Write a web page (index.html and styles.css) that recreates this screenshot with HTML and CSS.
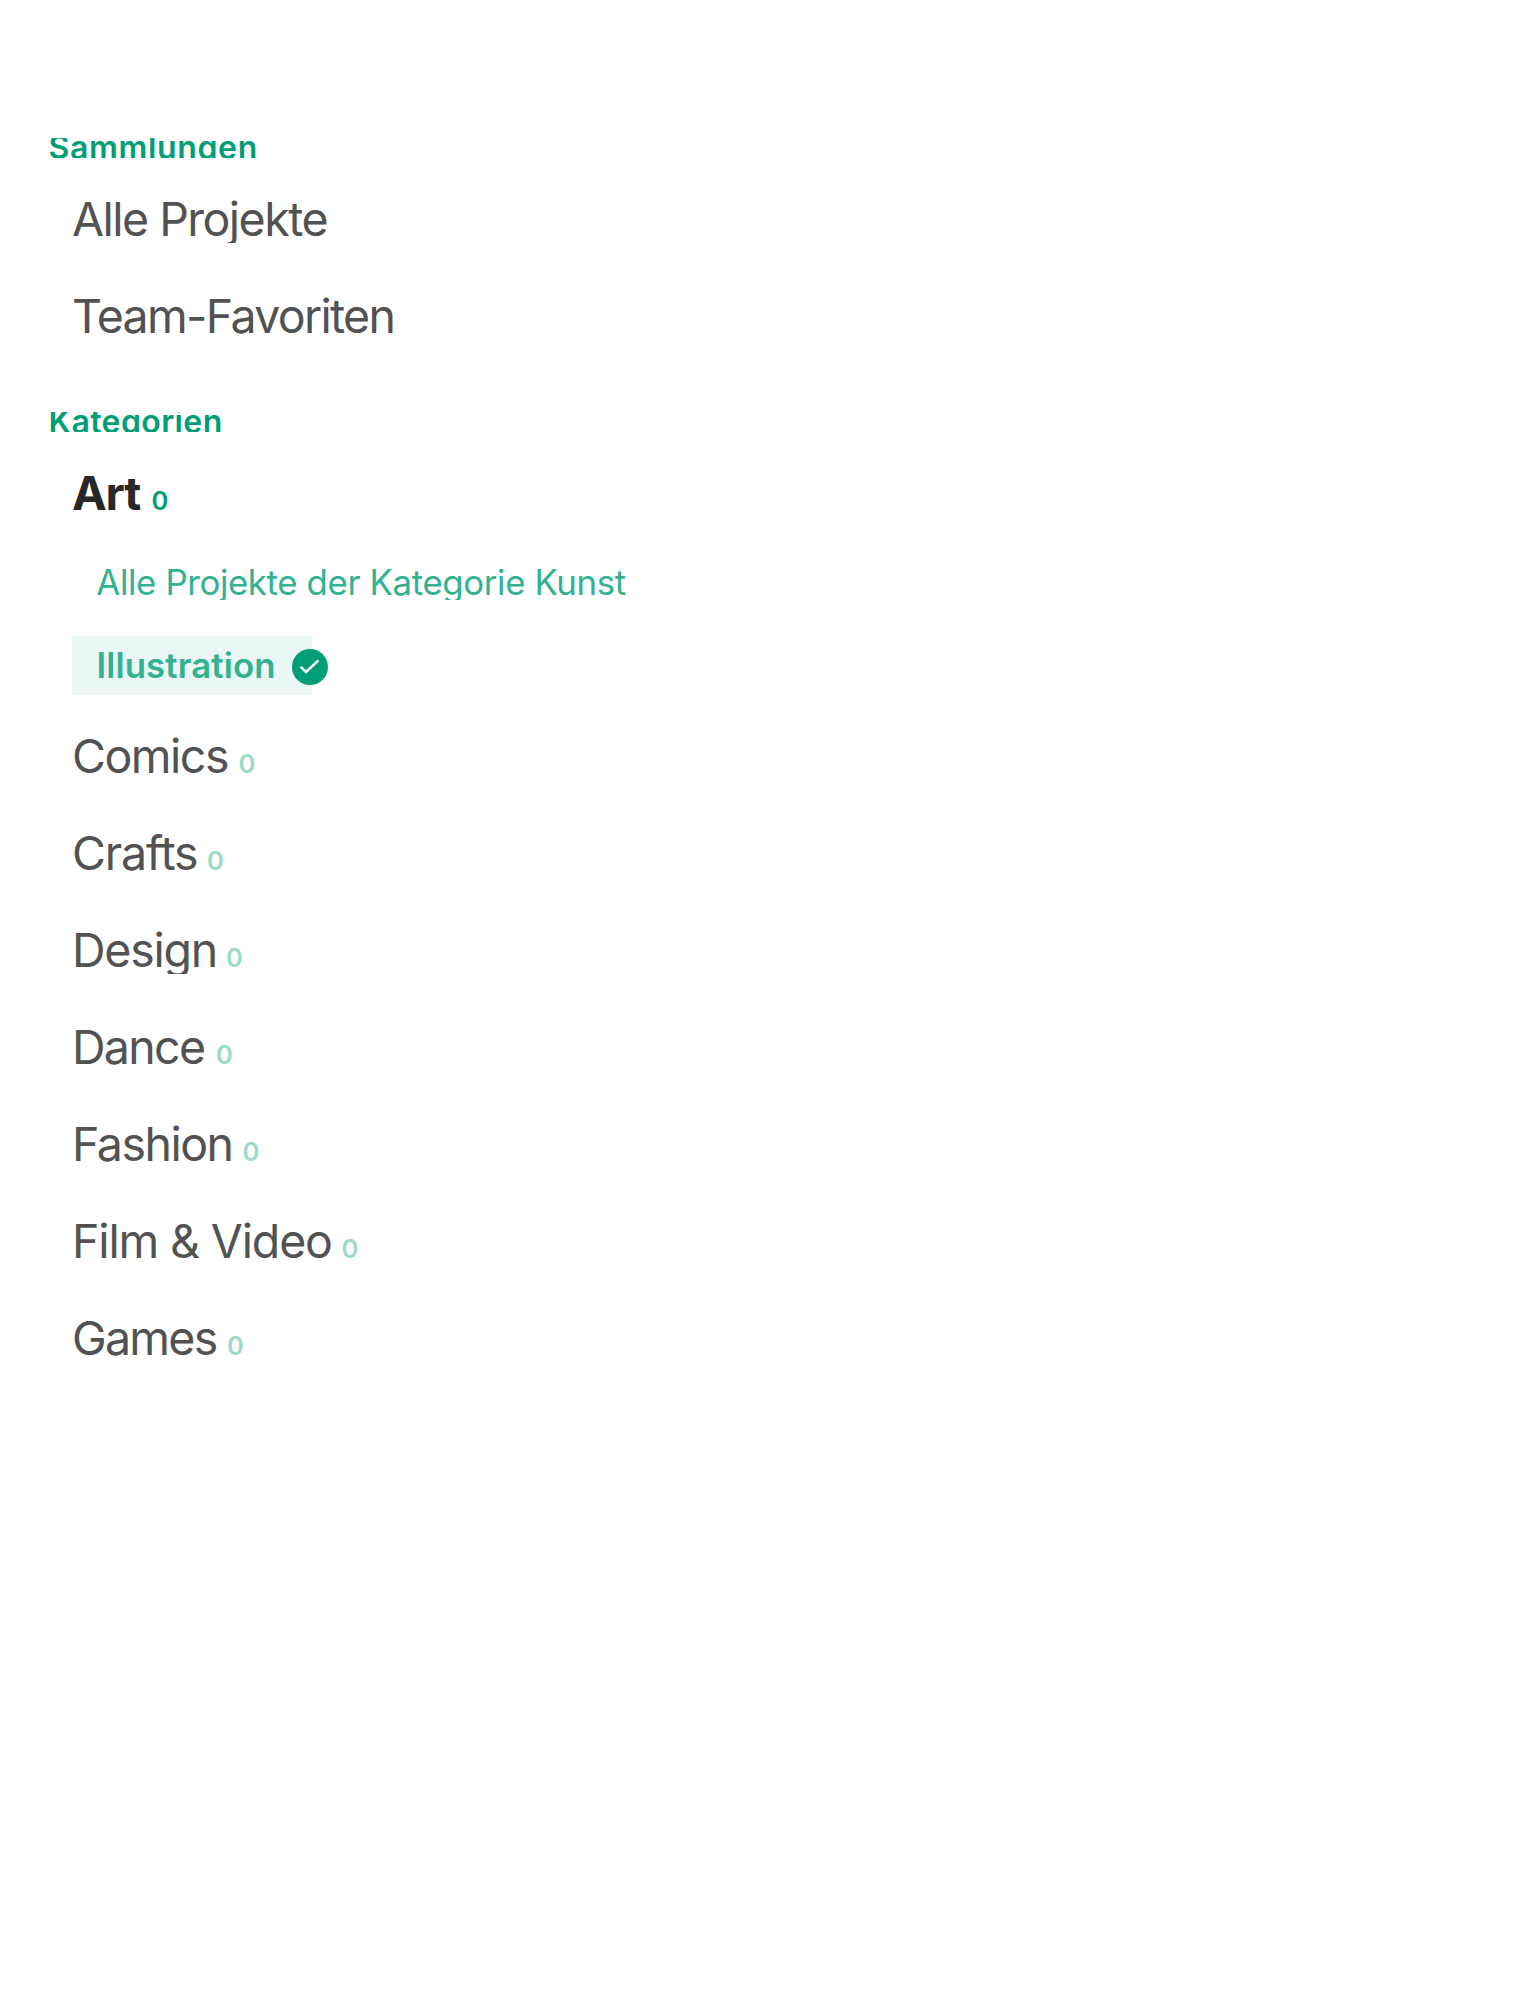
FILE: index.html
```
<!DOCTYPE html>
<html lang="de">
<head>
<meta charset="utf-8">
<title>Kategorien</title>
<link rel="stylesheet" href="styles.css">
</head>
<body>
<nav class="menu">
  <section class="collections">
    <h2 class="heading heading-collections">Sammlungen</h2>
    <ul class="list">
      <li class="row"><span class="label all">Alle Projekte</span></li>
      <li class="row"><span class="label team">Team-Favoriten</span></li>
    </ul>
  </section>
  <section class="categories">
    <h2 class="heading heading-categories">Kategorien</h2>
    <ul class="list">
      <li class="row selected"><span class="label art">Art</span><span class="count">0</span></li>
    </ul>
    <ul class="sublist">
      <li class="sub"><span class="sub-label kunst">Alle Projekte der Kategorie Kunst</span></li>
      <li class="sub active">
        <span class="sub-label illustration">Illustration</span>
        <svg class="check" width="36" height="36" viewBox="0 0 36 36"><circle cx="18" cy="18" r="18" fill="#009e74"/><path d="M8.6 17.6 14 23 26.4 11.4" fill="none" stroke="#fff" stroke-width="2.5"/></svg>
      </li>
    </ul>
    <ul class="list">
      <li class="row"><span class="label comics">Comics</span><span class="count">0</span></li>
      <li class="row"><span class="label crafts">Crafts</span><span class="count">0</span></li>
      <li class="row"><span class="label design">Design</span><span class="count">0</span></li>
      <li class="row"><span class="label dance">Dance</span><span class="count">0</span></li>
      <li class="row"><span class="label fashion">Fashion</span><span class="count">0</span></li>
      <li class="row"><span class="label film">Film &amp; Video</span><span class="count">0</span></li>
      <li class="row"><span class="label games">Games</span><span class="count">0</span></li>
    </ul>
  </section>
</nav>
</body>
</html>
```
FILE: styles.css
```
body {
  margin: 0;
  background: #fff;
  font-family: Inter, "Liberation Sans", sans-serif;
  color: #525252;
}

ul { list-style: none; margin: 0; padding: 0; }

.menu { padding-top: 138px; }
.categories { padding-top: 72px; }

/* Headings are cropped to a 20px strip */
.heading {
  margin: 0 0 37px 48.5px;
  height: 20px;
  line-height: 19px;
  overflow: hidden;
  font-size: 32px;
  font-weight: 600;
  color: #009e74;
}
.heading-collections { letter-spacing: 0.65px; }
.heading-categories { letter-spacing: 0.4px; }

.list {
  display: flex;
  flex-direction: column;
  gap: 49px;
  padding-left: 71px;
}
.row {
  display: flex;
  align-items: baseline;
  gap: 10px;
  height: 48px;
}
.label {
  box-sizing: border-box;
  height: 48px;
  line-height: 48px;
  padding-left: 1px;
  font-size: 46.5px;
  white-space: nowrap;
  overflow: hidden;
}
.count {
  font-size: 25.5px;
  line-height: 26px;
  font-weight: 600;
  color: #99dbc8;
}
.selected .label { font-weight: 700; color: #282828; }
.selected .count { color: #009e74; }

.all { letter-spacing: -1.53px; }
.team { letter-spacing: -1.68px; }
.art { width: 70.5px; letter-spacing: -1.2px; }
.comics { width: 157.5px; letter-spacing: -1.5px; }
.crafts { width: 126px; letter-spacing: -1.2px; }
.design { width: 145px; letter-spacing: -1.25px; }
.dance { width: 135px; letter-spacing: -1.7px; }
.fashion { width: 161.5px; letter-spacing: -1.5px; }
.film { width: 260.5px; letter-spacing: -1.15px; }
.games { width: 146px; letter-spacing: -1.75px; }

.sublist {
  display: flex;
  flex-direction: column;
  gap: 36px;
  padding: 47px 0 37px 72px;
}
.sub { display: flex; align-items: center; }
.sub-label {
  height: 36px;
  line-height: 36px;
  font-size: 34.8px;
  white-space: nowrap;
  overflow: hidden;
  color: #33b190;
}
.kunst { padding-left: 24.3px; letter-spacing: -0.37px; }
.active {
  width: 240px;
  height: 59px;
  background: #ebf7f5;
}
.illustration {
  flex: none;
  width: 195.5px;
  margin-bottom: 1px;
  padding-left: 24.5px;
  font-weight: 600;
  letter-spacing: 0.1px;
}
.check { flex: none; margin-top: 2px; }
```
